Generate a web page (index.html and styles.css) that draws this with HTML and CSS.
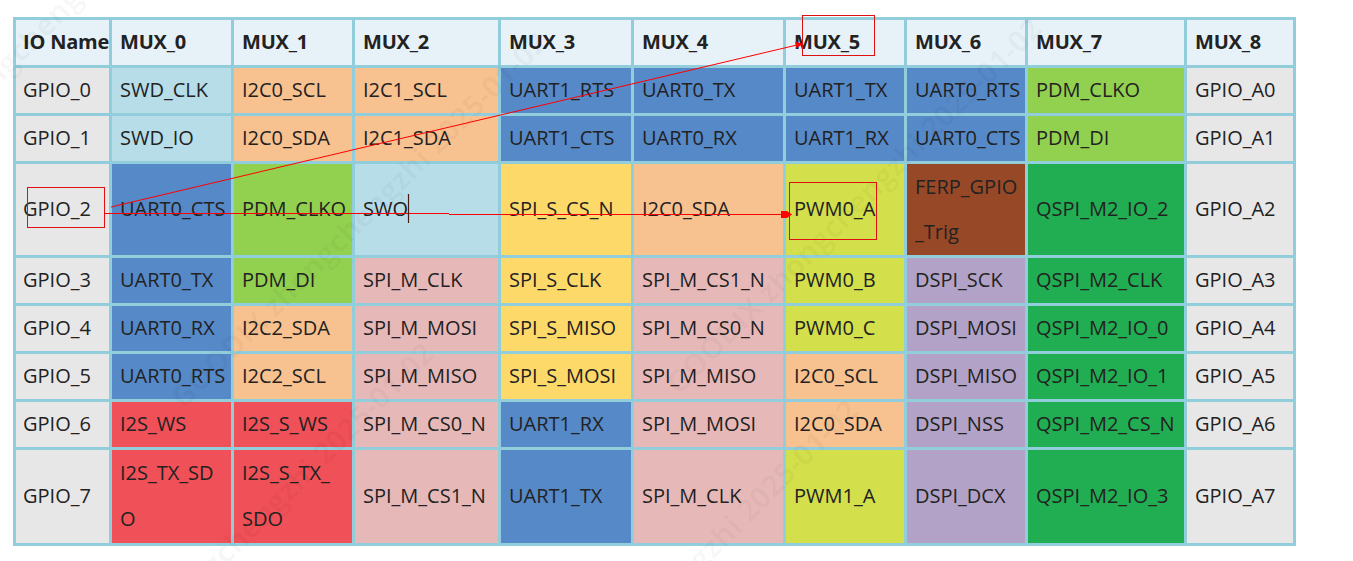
FILE: index.html
```html
<!DOCTYPE html>
<html lang="en">
<head>
<meta charset="utf-8">
<title>GPIO MUX table</title>
<link rel="stylesheet" href="styles.css">
</head>
<body>
<div class="page">
  <table class="mux">
    <colgroup>
      <col class="c0"><col class="c1"><col class="c2"><col class="c3"><col class="c4">
      <col class="c5"><col class="c6"><col class="c7"><col class="c8"><col class="c9">
    </colgroup>
    <thead>
      <tr>
        <th>IO Name</th><th>MUX_0</th><th>MUX_1</th><th>MUX_2</th><th>MUX_3</th>
        <th>MUX_4</th><th>MUX_5</th><th>MUX_6</th><th>MUX_7</th><th>MUX_8</th>
      </tr>
    </thead>
    <tbody>
      <tr>
        <td class="io">GPIO_0</td><td class="swd">SWD_CLK</td><td class="i2c">I2C0_SCL</td><td class="i2c">I2C1_SCL</td><td class="uart">UART1_RTS</td>
        <td class="uart">UART0_TX</td><td class="uart">UART1_TX</td><td class="uart">UART0_RTS</td><td class="pdm">PDM_CLKO</td><td class="io">GPIO_A0</td>
      </tr>
      <tr>
        <td class="io">GPIO_1</td><td class="swd">SWD_IO</td><td class="i2c">I2C0_SDA</td><td class="i2c">I2C1_SDA</td><td class="uart">UART1_CTS</td>
        <td class="uart">UART0_RX</td><td class="uart">UART1_RX</td><td class="uart">UART0_CTS</td><td class="pdm">PDM_DI</td><td class="io">GPIO_A1</td>
      </tr>
      <tr>
        <td class="io">GPIO_2</td><td class="uart">UART0_CTS</td><td class="pdm">PDM_CLKO</td><td class="swd">SWO</td><td class="spis">SPI_S_CS_N</td>
        <td class="i2c">I2C0_SDA</td><td class="pwm">PWM0_A</td><td class="ferp two">FERP_GPIO<br>_Trig</td><td class="qspi">QSPI_M2_IO_2</td><td class="io">GPIO_A2</td>
      </tr>
      <tr>
        <td class="io">GPIO_3</td><td class="uart">UART0_TX</td><td class="pdm">PDM_DI</td><td class="spim">SPI_M_CLK</td><td class="spis">SPI_S_CLK</td>
        <td class="spim">SPI_M_CS1_N</td><td class="pwm">PWM0_B</td><td class="dspi">DSPI_SCK</td><td class="qspi">QSPI_M2_CLK</td><td class="io">GPIO_A3</td>
      </tr>
      <tr>
        <td class="io">GPIO_4</td><td class="uart">UART0_RX</td><td class="i2c">I2C2_SDA</td><td class="spim">SPI_M_MOSI</td><td class="spis">SPI_S_MISO</td>
        <td class="spim">SPI_M_CS0_N</td><td class="pwm">PWM0_C</td><td class="dspi">DSPI_MOSI</td><td class="qspi">QSPI_M2_IO_0</td><td class="io">GPIO_A4</td>
      </tr>
      <tr>
        <td class="io">GPIO_5</td><td class="uart">UART0_RTS</td><td class="i2c">I2C2_SCL</td><td class="spim">SPI_M_MISO</td><td class="spis">SPI_S_MOSI</td>
        <td class="spim">SPI_M_MISO</td><td class="i2c">I2C0_SCL</td><td class="dspi">DSPI_MISO</td><td class="qspi">QSPI_M2_IO_1</td><td class="io">GPIO_A5</td>
      </tr>
      <tr>
        <td class="io">GPIO_6</td><td class="i2s">I2S_WS</td><td class="i2s">I2S_S_WS</td><td class="spim">SPI_M_CS0_N</td><td class="uart">UART1_RX</td>
        <td class="spim">SPI_M_MOSI</td><td class="i2c">I2C0_SDA</td><td class="dspi">DSPI_NSS</td><td class="qspi">QSPI_M2_CS_N</td><td class="io">GPIO_A6</td>
      </tr>
      <tr>
        <td class="io">GPIO_7</td><td class="i2s two">I2S_TX_SD<br>O</td><td class="i2s two">I2S_S_TX_<br>SDO</td><td class="spim">SPI_M_CS1_N</td><td class="uart">UART1_TX</td>
        <td class="spim">SPI_M_CLK</td><td class="pwm">PWM1_A</td><td class="dspi">DSPI_DCX</td><td class="qspi">QSPI_M2_IO_3</td><td class="io">GPIO_A7</td>
      </tr>
    </tbody>
  </table>

  <svg class="marks" width="1353" height="561" viewBox="0 0 1353 561" aria-hidden="true">
    <g class="wm" transform="rotate(-45)">
      <text x="-120" y="60">zhongchengzhi</text>
      <text x="-160" y="420">GOODIX zhongchengzhi 2025-01-02</text>
      <text x="-330" y="560">zhongchengzhi 2025-01-02</text>
      <text x="200" y="760">GOODIX zhongchengzhi 2025-01-02</text>
      <text x="-200" y="900">GOODIX zhongchengzhi 2025-01-02</text>
    </g>
    <line x1="111" y1="207" x2="797" y2="45" class="ln"/>
    <polygon points="803,44 795,41.5 796.5,48" class="head"/>
    <rect x="802.5" y="15.5" width="72" height="40" class="box"/>
    <rect x="27.5" y="187.5" width="77" height="40" class="box"/>
    <line x1="104" y1="213.5" x2="449" y2="213.5" class="ln"/>
    <line x1="449" y1="214.5" x2="784" y2="214.5" class="ln"/>
    <polygon points="781,211 787,211 792,214.5 787,218 781,218" class="head"/>
    <rect x="789.5" y="182.5" width="87" height="57" class="box"/>
    <line x1="408.5" y1="194" x2="408.5" y2="223" class="caret"/>
  </svg>
</div>
</body>
</html>
```

FILE: styles.css
```css
html, body {
  margin: 0;
  padding: 0;
  background: #ffffff;
}

.page {
  position: relative;
  width: 1353px;
  height: 561px;
  overflow: hidden;
  padding: 17px 0 0 13px;
  box-sizing: border-box;
}

.mux {
  table-layout: fixed;
  border-collapse: separate;
  border-spacing: 3px;
  background: #92cddc;
  width: 1283px;
  font-family: "Open Sans", "Noto Sans", sans-serif;
  font-size: 20px;
  color: #222222;
}

.c0 { width: 93px; }
.c1 { width: 119px; }
.c2 { width: 118px; }
.c3 { width: 143px; }
.c4 { width: 130px; }
.c5 { width: 149px; }
.c6 { width: 118px; }
.c7 { width: 118px; }
.c8 { width: 156px; }
.c9 { width: 106px; }

.mux th,
.mux td {
  padding: 0 0 2px 8px;
  line-height: 43px;
  height: 43px;
  text-align: left;
  vertical-align: middle;
  white-space: nowrap;
  overflow: visible;
}

.mux th {
  background: #e6f1f8;
  font-weight: 700;
  letter-spacing: -0.2px;
}

.mux th:first-child,
.mux td:first-child {
  padding-left: 7px;
}

.mux td.two {
  line-height: 46px;
  padding-bottom: 1px;
}

.mux td.ferp {
  line-height: 45px;
  padding-bottom: 1px;
}

.io   { background: #e7e7e7; }
.swd  { background: #b7dde9; }
.i2c  { background: #f8c190; }
.uart { background: #5689c8; }
.pdm  { background: #92d050; }
.spis { background: #fdd96a; }
.spim { background: #e6b9b8; }
.pwm  { background: #d3df4b; }
.ferp { background: #974827; }
.dspi { background: #b3a2c7; }
.qspi { background: #21ae53; }
.i2s  { background: #f05057; }

.marks {
  position: absolute;
  left: 0;
  top: 0;
  pointer-events: none;
}

.marks .ln {
  stroke: #ff0000;
  stroke-width: 1;
}

.marks .head {
  fill: #ff0000;
}

.marks .box {
  fill: none;
  stroke: #e01010;
  stroke-width: 1;
}

.marks .caret {
  stroke: #4a1a10;
  stroke-width: 1.2;
}

.marks .wm text {
  font-family: "Open Sans", sans-serif;
  font-size: 30px;
  font-weight: 700;
  fill: #000000;
  fill-opacity: 0.03;
}
```
